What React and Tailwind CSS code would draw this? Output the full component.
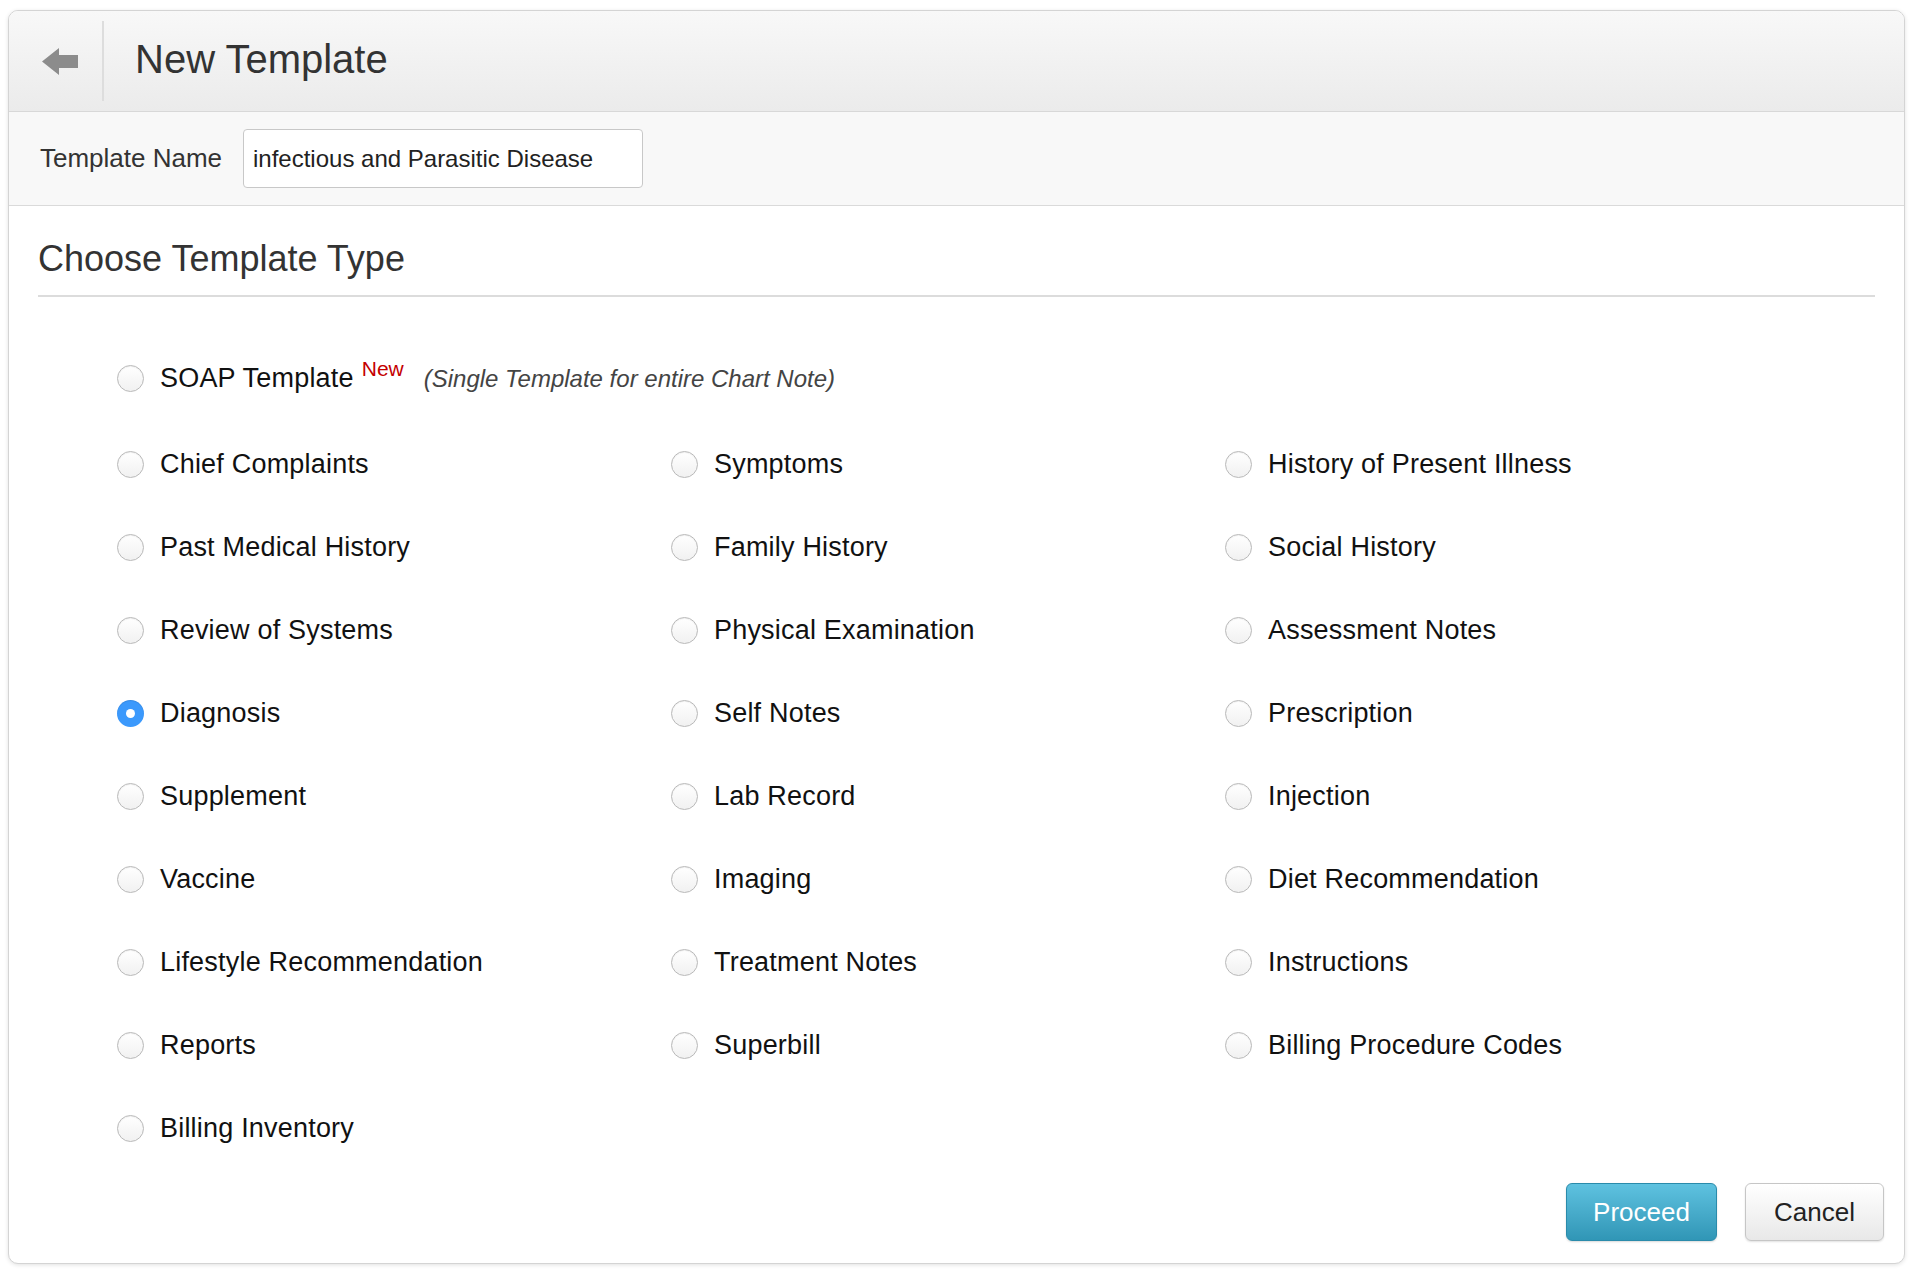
import React, { useState } from "react";

const font = { fontFamily: '"Liberation Sans", Arial, Helvetica, sans-serif' };

const types = [
  ["Chief Complaints", "Symptoms", "History of Present Illness"],
  ["Past Medical History", "Family History", "Social History"],
  ["Review of Systems", "Physical Examination", "Assessment Notes"],
  ["Diagnosis", "Self Notes", "Prescription"],
  ["Supplement", "Lab Record", "Injection"],
  ["Vaccine", "Imaging", "Diet Recommendation"],
  ["Lifestyle Recommendation", "Treatment Notes", "Instructions"],
  ["Reports", "Superbill", "Billing Procedure Codes"],
  ["Billing Inventory"],
];

function Radio({ checked }) {
  if (checked) {
    return (
      <span className="w-[27px] h-[27px] shrink-0 rounded-full bg-[#3b99fc] flex items-center justify-center shadow-[inset_0_1px_1px_rgba(0,0,0,0.1)]">
        <span className="w-[9px] h-[9px] rounded-full bg-white" />
      </span>
    );
  }
  return (
    <span className="w-[27px] h-[27px] shrink-0 rounded-full border border-[#b9b9b9] bg-gradient-to-b from-white to-[#f1f1f1] shadow-[inset_0_1px_1px_rgba(0,0,0,0.06)]" />
  );
}

function Option({ label, checked, onPick }) {
  return (
    <label onClick={onPick} className="h-[83px] flex items-center gap-[16px] cursor-pointer">
      <Radio checked={checked} />
      <span className="text-[27px] text-[#111] tracking-[0.2px]">{label}</span>
    </label>
  );
}

export default function App() {
  const [picked, setPicked] = useState("Diagnosis");
  return (
    <div style={font} className="w-full h-[1272px] bg-white pt-[10px] pl-[8px] pr-[13px]">
      <div className="w-[1897px] rounded-[10px] border border-[#d4d4d4] shadow-[0_1px_4px_rgba(0,0,0,0.12)] overflow-hidden bg-white">
        <div className="h-[101px] flex items-center bg-gradient-to-b from-[#f8f8f8] to-[#ebebeb] border-b border-[#d8d8d8]">
          <div className="w-[95px] h-[80px] flex items-center justify-center pl-[9px] border-r-2 border-[#dddddd]">
            <svg width="36" height="27" viewBox="0 0 36 27">
              <path d="M0 13.5 L17 0 L17 7 L36 7 L36 20 L17 20 L17 27 Z" fill="#8c8c8c" />
            </svg>
          </div>
          <h1 className="ml-[31px] pb-[5px] text-[40px] text-[#333]">New Template</h1>
        </div>

        <div className="h-[94px] flex items-center bg-[#f8f8f8] border-b border-[#dadada] pl-[31px]">
          <span className="text-[26px] text-[#333] w-[203px]">Template Name</span>
          <input
            defaultValue="infectious and Parasitic Disease"
            className="w-[400px] h-[59px] rounded-[4px] border border-[#c8c8c8] bg-white px-[9px] text-[24px] text-[#222] outline-none"
            style={font}
          />
        </div>

        <div className="px-[29px] pt-[33px]">
          <h2 className="text-[36px] leading-[40px] text-[#333] pb-[16px] border-b-2 border-[#dcdcdc]">Choose Template Type</h2>
        </div>

        <div className="pl-[108px] pt-[40px]">
          <div className="h-[83px] mb-[3px] flex items-center gap-[16px]">
            <Radio checked={picked === "SOAP"} />
            <span onClick={() => setPicked("SOAP")} className="text-[27px] text-[#111] tracking-[0.2px] cursor-pointer">SOAP Template</span>
            <span className="-ml-[8px] relative -top-[10px] text-[21px] text-[#c40000]">New</span>
            <span className="ml-[4px] italic text-[24px] text-[#444]">(Single Template for entire Chart Note)</span>
          </div>
          {types.map((row, i) => (
            <div key={i} className="grid grid-cols-[554px_554px_1fr]">
              {row.map((t) => (
                <Option key={t} label={t} checked={picked === t} onPick={() => setPicked(t)} />
              ))}
            </div>
          ))}
        </div>

        <div className="flex justify-end gap-[28px] pr-[20px] pt-[13px] pb-[22px]">
          <button className="w-[151px] h-[58px] rounded-[6px] border border-[#2a8bab] bg-gradient-to-b from-[#5ec2e0] to-[#3096b6] text-white text-[26px] shadow-[0_1px_2px_rgba(0,0,0,0.15)]" style={font}>
            Proceed
          </button>
          <button className="w-[139px] h-[58px] rounded-[6px] border border-[#c6c6c6] bg-gradient-to-b from-white to-[#e8e8e8] text-[#222] text-[26px] shadow-[0_1px_2px_rgba(0,0,0,0.12)]" style={font}>
            Cancel
          </button>
        </div>
      </div>
    </div>
  );
}
